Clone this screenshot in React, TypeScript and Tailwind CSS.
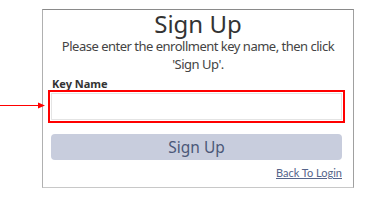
import React from 'react';

export default function App() {
    return (
        <div className="relative h-[203px] w-[377px] overflow-hidden bg-white" style={{ fontFamily: '"Noto Sans", sans-serif' }}>
            {/* annotation arrow pointing at the input */}
            <svg className="absolute left-0 top-[101px]" width="46" height="9" viewBox="0 0 46 9">
                <line x1="0" y1="4.5" x2="40" y2="4.5" stroke="#ff0000" strokeWidth="1.2" />
                <path d="M38 1.5 L45 4.5 L38 7.5 Z" fill="#ff0000" />
            </svg>

            <div className="ml-[42px] mt-[9px] flex h-[179px] w-[312px] flex-col border border-t-[#8a8a8a] border-l-[#b0b0b0] border-r-[#a0a0a0] border-b-[#c8c8c8] bg-white px-[5px]">
                <h1 className="text-center text-[24px] leading-[27px] text-[#333]">Sign Up</h1>
                <p className="text-center text-[13px] leading-[18px] tracking-[-0.5px] text-[#444]">
                    Please enter the enrollment key name, then click 'Sign Up'.
                </p>
                <label className="mt-[4px] pl-[4px] text-[11px] font-bold leading-[13px] text-[#333]">Key Name</label>
                <div className="h-[33px] w-[297px] border-2 border-[#ff0000] p-[1px]">
                    <div className="h-full w-full border border-[#e4e4e4] bg-white" />
                </div>
                <button
                    type="button"
                    className="ml-[3px] mt-[11px] h-[26px] w-[291px] rounded-[4px] bg-[#c8cddd] text-[15.5px] leading-[26px] text-[#4b5878]"
                >
                    Sign Up
                </button>
                <div className="mt-[6px] flex w-[294px] justify-end">
                    <span
                        className="text-[11px] leading-[14px] text-[#55648a] underline"
                        style={{ fontFamily: 'Lato, sans-serif' }}
                    >
                        Back To Login
                    </span>
                </div>
            </div>
        </div>
    );
}
